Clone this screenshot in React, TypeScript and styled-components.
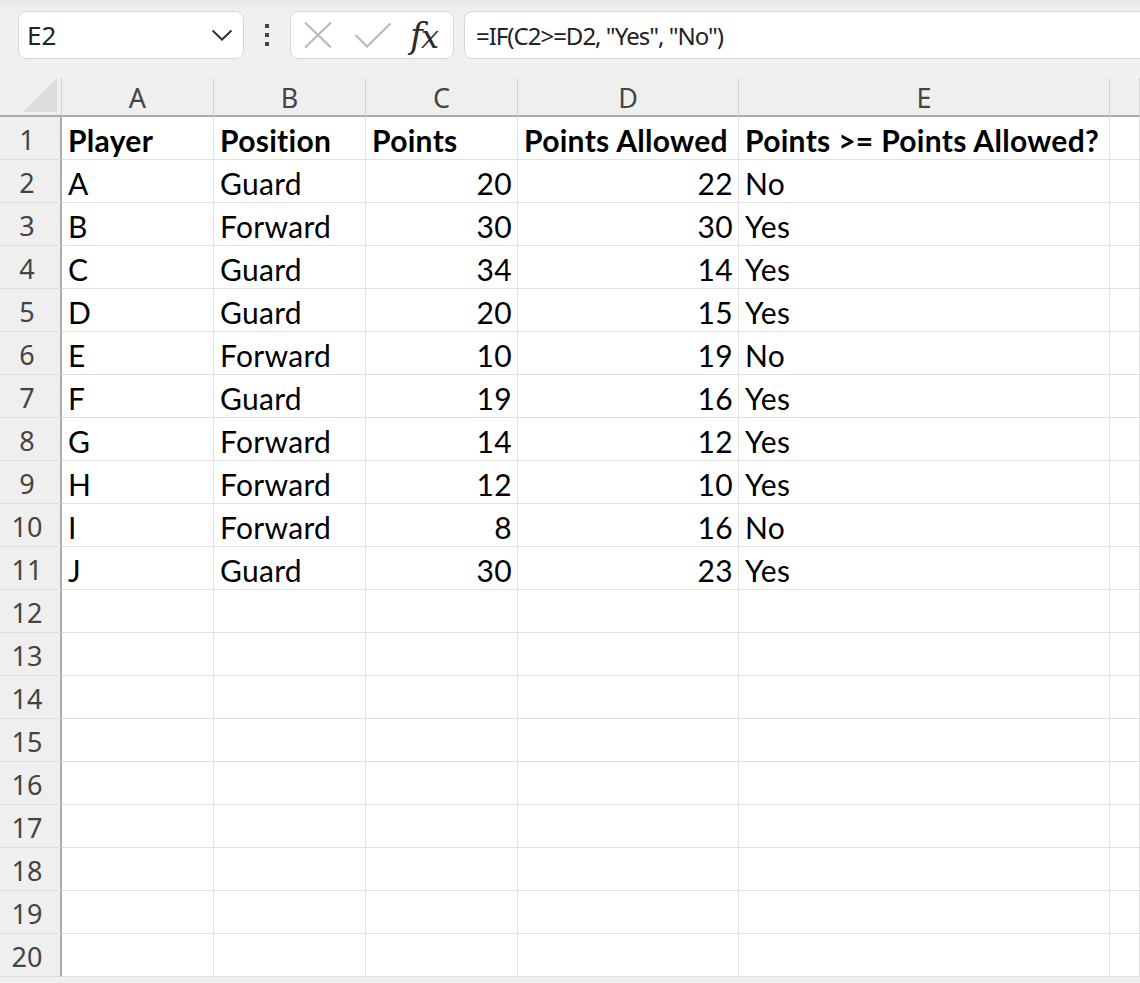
import React from 'react';
import styled, { createGlobalStyle } from 'styled-components';

const GlobalStyle = createGlobalStyle`
  html, body {
    margin: 0;
    padding: 0;
    background: #f0f0f0;
    overflow: hidden;
  }
  * {
    box-sizing: border-box;
  }
`;

const columns = ['A', 'B', 'C', 'D', 'E', ''];
const widths = [152, 152, 152, 221, 371];

type Row = [string, string, string, string, string] | null;

const data: Row[] = [
  ['Player', 'Position', 'Points', 'Points Allowed', 'Points >= Points Allowed?'],
  ['A', 'Guard', '20', '22', 'No'],
  ['B', 'Forward', '30', '30', 'Yes'],
  ['C', 'Guard', '34', '14', 'Yes'],
  ['D', 'Guard', '20', '15', 'Yes'],
  ['E', 'Forward', '10', '19', 'No'],
  ['F', 'Guard', '19', '16', 'Yes'],
  ['G', 'Forward', '14', '12', 'Yes'],
  ['H', 'Forward', '12', '10', 'Yes'],
  ['I', 'Forward', '8', '16', 'No'],
  ['J', 'Guard', '30', '23', 'Yes'],
  null, null, null, null, null, null, null, null, null,
];

const App = () => {
  return (
    <>
      <GlobalStyle />
      <Page>
        <Toolbar>
          <NameBox>
            <NameText>E2</NameText>
            <svg width="22" height="12" viewBox="0 0 22 12">
              <path d="M1.5 1.5 L11 10.5 L20.5 1.5" fill="none" stroke="#333" strokeWidth="2" />
            </svg>
          </NameBox>
          <Dots>
            <span />
            <span />
            <span />
          </Dots>
          <FxBox>
            <svg width="30" height="28" viewBox="0 0 30 28">
              <path d="M2 1.5 L28 26.5 M28 1.5 L2 26.5" stroke="#bababa" strokeWidth="2.2" />
            </svg>
            <svg width="38" height="26" viewBox="0 0 38 26">
              <path d="M1.5 13 L13 24.5 L36.5 1.5" fill="none" stroke="#bababa" strokeWidth="2.2" />
            </svg>
            <FxLabel>
              f<i>x</i>
            </FxLabel>
          </FxBox>
          <FormulaBox>=IF(C2&gt;=D2, "Yes", "No")</FormulaBox>
        </Toolbar>
        <Grid>
          <Corner>
            <svg width="36" height="36" viewBox="0 0 36 36">
              <path d="M35 1 L35 35 L1 35 Z" fill="#dcdcdc" />
            </svg>
          </Corner>
          {columns.map((c, i) => (
            <ColHead key={i}>{c}</ColHead>
          ))}
          {data.map((row, r) => (
            <React.Fragment key={r}>
              <RowHead>{r + 1}</RowHead>
              {widths.map((_, c) => (
                <Cell key={c} $bold={r === 0} $right={r > 0 && (c === 2 || c === 3)}>
                  {row ? row[c] : ''}
                </Cell>
              ))}
              <Cell />
            </React.Fragment>
          ))}
        </Grid>
      </Page>
    </>
  );
};

export default App;

const Page = styled.div`
  width: 1140px;
  height: 983px;
  overflow: hidden;
  background: #f0f0f0;
`;

const Toolbar = styled.div`
  display: flex;
  align-items: center;
  height: 78px;
  padding: 0 0 8px 18px;
  background: linear-gradient(#e9e9e9 0px, #f0f0f0 10px);
`;

const Box = styled.div`
  height: 48px;
  background: #fff;
  border: 1px solid #d6d6d6;
  border-radius: 8px;
  display: flex;
  align-items: center;
`;

const NameBox = styled(Box)`
  width: 226px;
  padding: 0 10px 0 8px;
  justify-content: space-between;
`;

const NameText = styled.span`
  font-family: 'Noto Sans', sans-serif;
  font-size: 26px;
  color: #222;
`;

const Dots = styled.div`
  width: 46px;
  display: flex;
  flex-direction: column;
  align-items: center;
  gap: 5px;

  span {
    width: 4px;
    height: 4px;
    background: #444;
  }
`;

const FxBox = styled(Box)`
  width: 164px;
  padding: 0 10px 0 12px;
  gap: 21px;
`;

const FxLabel = styled.span`
  font-family: 'DejaVu Serif', serif;
  font-style: italic;
  font-weight: 400;
  font-size: 35px;
  color: #2b2b2b;
  line-height: 1;
  margin-left: -3px;
  margin-top: 2px;
  letter-spacing: -2px;

  i {
    font-size: 32px;
  }
`;

const FormulaBox = styled(Box)`
  flex: 1;
  margin-left: 10px;
  margin-right: -20px;
  padding-left: 11px;
  font-family: 'Noto Sans', sans-serif;
  font-size: 24px;
  letter-spacing: -1px;
  color: #222;
`;

const Grid = styled.div`
  display: grid;
  grid-template-columns: 62px ${widths.map((w) => `${w}px`).join(' ')} 1fr;
  grid-template-rows: 39px;
  grid-auto-rows: 43px;
  background: #fff;
`;

const HeadBase = styled.div`
  background: #efefef;
  font-family: 'Noto Sans', sans-serif;
  font-size: 27px;
  color: #444;
  display: flex;
  align-items: center;
`;

const Corner = styled(HeadBase)`
  border-right: 1px solid #d0d0d0;
  border-bottom: 2px solid #ababab;
  align-items: flex-end;
  justify-content: flex-end;
  padding: 0 3px 2px 0;
`;

const ColHead = styled(HeadBase)`
  justify-content: center;
  border-right: 1px solid #d4d4d4;
  border-bottom: 2px solid #ababab;
  padding-top: 2px;
`;

const RowHead = styled(HeadBase)`
  justify-content: center;
  border-right: 2px solid #ababab;
  border-bottom: 1px solid #dedede;
  padding-right: 6px;
  padding-top: 2px;
`;

const Cell = styled.div<{ $bold?: boolean; $right?: boolean }>`
  border-right: 1px solid #e1e1e1;
  border-bottom: 1px solid #e1e1e1;
  font-family: Lato, 'Liberation Sans', sans-serif;
  font-size: 30px;
  letter-spacing: 0.3px;
  font-weight: ${(p) => (p.$bold ? 700 : 400)};
  color: #000;
  display: flex;
  align-items: center;
  justify-content: ${(p) => (p.$right ? 'flex-end' : 'flex-start')};
  padding: 3px 5px 0 6px;
  white-space: nowrap;
  overflow: hidden;
`;
